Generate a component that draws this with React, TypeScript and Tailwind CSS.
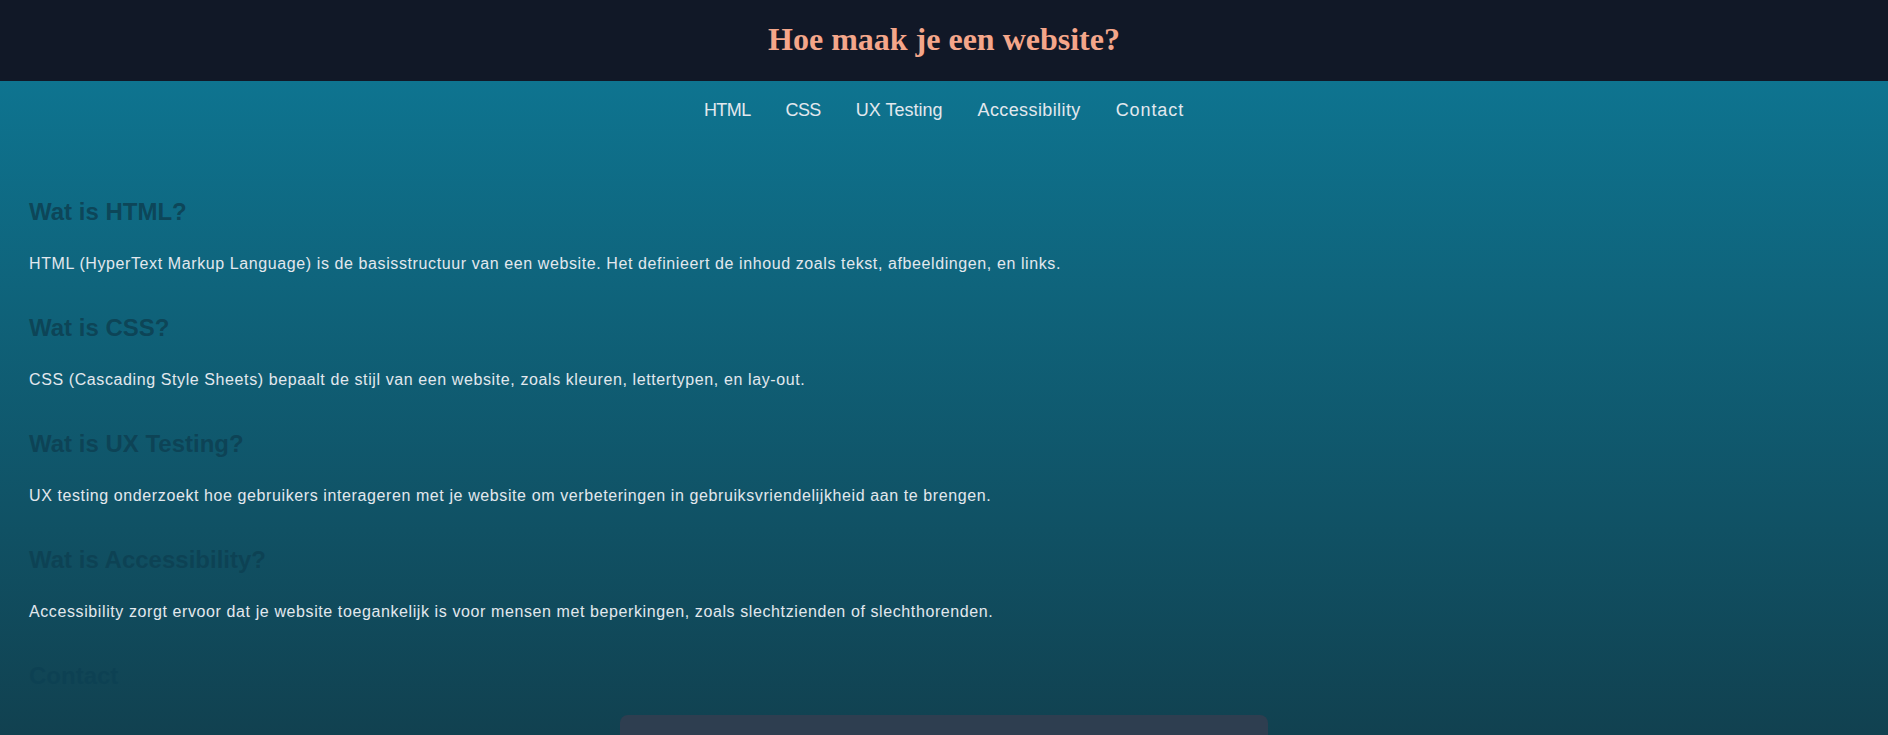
import React from "react";

const sections = [
  {
    title: "Wat is HTML?",
    text: "HTML (HyperText Markup Language) is de basisstructuur van een website. Het definieert de inhoud zoals tekst, afbeeldingen, en links.",
  },
  {
    title: "Wat is CSS?",
    text: "CSS (Cascading Style Sheets) bepaalt de stijl van een website, zoals kleuren, lettertypen, en lay-out.",
  },
  {
    title: "Wat is UX Testing?",
    text: "UX testing onderzoekt hoe gebruikers interageren met je website om verbeteringen in gebruiksvriendelijkheid aan te brengen.",
  },
  {
    title: "Wat is Accessibility?",
    text: "Accessibility zorgt ervoor dat je website toegankelijk is voor mensen met beperkingen, zoals slechtzienden of slechthorenden.",
  },
];

export default function App() {
  return (
    <div className="min-h-screen bg-[linear-gradient(to_bottom,#111827_0px,#111827_81px,#0e7490_81px,#114150_735px,#10303c_1100px)] font-['Century_Gothic','Liberation_Sans',sans-serif]">
      <header className="h-[81px] bg-[#111827] flex items-center justify-center pb-[2px]">
        <h1 className="font-['Liberation_Serif',serif] font-bold text-[32px] leading-[37px] text-[#f4a68a]">
          Hoe maak je een website?
        </h1>
      </header>
      <nav className="pt-[18px] flex justify-center gap-[35px] text-[18px] leading-[22px] text-[#e2e8ee]">
        <a href="#html" className="tracking-[-0.6px]">HTML</a>
        <a href="#css" className="tracking-[-0.6px]">CSS</a>
        <a href="#ux">UX Testing</a>
        <a href="#accessibility" className="tracking-[0.4px]">Accessibility</a>
        <a href="#contact" className="tracking-[0.9px]">Contact</a>
      </nav>
      <main className="px-[29px] pt-[77px] pb-10">
        {sections.map((s) => (
          <section key={s.title} className="mb-[38px]">
            <h2 className="font-['Liberation_Sans',Arial,sans-serif] font-bold text-[24px] leading-[28px] text-[#0d4153]/90 mb-[26px]">
              {s.title}
            </h2>
            <p className="text-[16px] leading-[24px] tracking-[0.6px] text-[#e2e8ee]">{s.text}</p>
          </section>
        ))}
        <section>
          <h2 className="font-['Liberation_Sans',Arial,sans-serif] font-bold text-[24px] leading-[28px] text-[#0d4153]/90 mb-[25px]">
            Contact
          </h2>
          <div className="mx-auto w-[648px] h-[260px] rounded-lg bg-[#2e3e50]" />
        </section>
      </main>
    </div>
  );
}
